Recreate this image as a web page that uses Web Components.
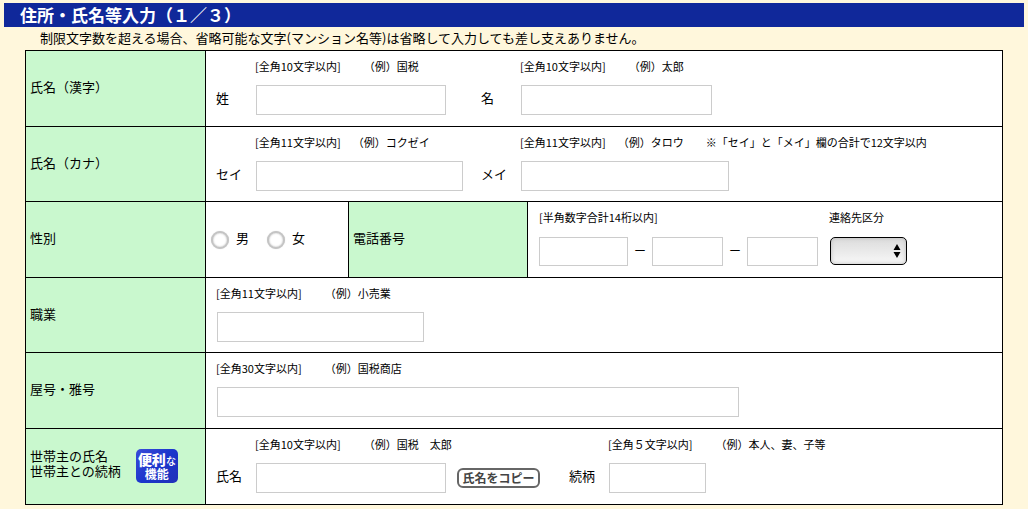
<!DOCTYPE html>
<html lang="ja">
<head>
<meta charset="utf-8">
<meta name="viewport" content="width=device-width, initial-scale=1">
<title>住所・氏名等入力</title>
<style>
  body {
    margin: 0;
    background: #fff7dc;
    color: #000;
    font-family: "Noto Sans CJK JP", sans-serif;
    font-size: 13px;
    line-height: 15px;
    text-spacing-trim: space-all;
  }
</style>
</head>
<body>
<entry-page></entry-page>

<template id="entry-page">
  <style>
    :host { display: block; padding: 3px 4px 4px; }
    p { margin: 0 36px; padding-bottom: 2px; line-height: 21px; }
    form { margin: 0 21px; border: 1px solid #000; border-top: 0; background: #fff; }
    form-row:nth-child(even):not(:last-child) { --row: 75px; }
    .two { display: flex; align-items: center; gap: 15px; }
    .two span { padding-bottom: 3px; }
    handy-badge { margin-top: 2px; }
  </style>
  <page-banner>住所・氏名等入力（１／３）</page-banner>
  <p>制限文字数を超える場合、省略可能な文字(マンション名等)は省略して入力しても差し支えありません。</p>
  <form>
    <form-row>
      <span slot="head">氏名（漢字）</span>
      <text-field label="姓" hint="[全角10文字以内]" example="　　（例）国税" width="190" span="265"></text-field>
      <text-field label="名" hint="[全角10文字以内]" example="　　（例）太郎" width="191"></text-field>
    </form-row>
    <form-row>
      <span slot="head">氏名（カナ）</span>
      <text-field label="セイ" hint="[全角11文字以内]" example="　（例）コクゼイ" width="207" span="265"></text-field>
      <text-field label="メイ" hint="[全角11文字以内]" example="　（例）タロウ　　※「セイ」と「メイ」欄の合計で12文字以内" width="208"></text-field>
    </form-row>
    <form-row>
      <span slot="head">性別</span>
      <gender-choice></gender-choice>
      <phone-field></phone-field>
    </form-row>
    <form-row>
      <span slot="head">職業</span>
      <text-field name="職業" hint="[全角11文字以内]" example="　　（例）小売業" width="207"></text-field>
    </form-row>
    <form-row>
      <span slot="head">屋号・雅号</span>
      <text-field name="屋号・雅号" hint="[全角30文字以内]" example="　　（例）国税商店" width="522"></text-field>
    </form-row>
    <form-row>
      <div class="two" slot="head">
        <span>世帯主の氏名<br>世帯主との続柄</span>
        <handy-badge></handy-badge>
      </div>
      <text-field label="氏名" hint="[全角10文字以内]" example="　　（例）国税　太郎" width="190" span="353">
        <copy-button>氏名をコピー</copy-button>
      </text-field>
      <text-field label="続柄" hint="[全角５文字以内]" example="　　（例）本人、妻、子等" width="97"></text-field>
    </form-row>
  </form>
</template>

<template id="page-banner">
  <style>
    :host { display: block; background: #10289a; color: #fff; }
    h1 { margin: 0; padding: 0 16px 1px; font-size: 17px; line-height: 23px; text-spacing-trim: normal; }
  </style>
  <h1><slot></slot></h1>
</template>

<template id="form-row">
  <style>
    :host { display: flex; box-sizing: border-box; min-height: var(--row, 76px); border-top: 1px solid #000; }
    .head {
      flex: none; display: flex; align-items: center; box-sizing: border-box;
      width: 180px; padding: 0 4px 4px; border-right: 1px solid #000; background: #c9f8ce;
    }
    .body { flex: 1; display: flex; min-width: 0; padding-left: 10px; }
  </style>
  <div class="head"><slot name="head"></slot></div>
  <div class="body"><slot></slot></div>
</template>

<template id="text-field">
  <style>
    :host { display: block; flex: none; padding-top: 7px; }
    .hint { display: flex; gap: 1px; margin-bottom: 11px; font-size: 11px; line-height: 16px; white-space: pre; }
    .line { display: flex; align-items: center; }
    label { width: 39px; padding-bottom: 5px; }
    label:empty { display: none; }
    .labelled .hint { margin-left: 39px; }
    input {
      box-sizing: border-box; height: 30px; margin: 0 0 0 1px; padding: 0 4px;
      border: 1px solid #ccc; border-radius: 0; background: #fff; font: inherit;
    }
    ::slotted(copy-button) { margin-left: 11px; }
  </style>
  <div class="wrap">
    <div class="hint" id="hint"><span class="limit"></span><span class="example"></span></div>
    <div class="line"><label for="box"></label><input id="box" type="text" aria-describedby="hint"><slot></slot></div>
  </div>
</template>

<template id="gender-choice">
  <style>
    :host { display: flex; align-items: center; flex: none; box-sizing: border-box; width: 132px; padding-bottom: 4px; }
    label { display: flex; align-items: center; gap: 7px; margin-right: 18px; }
    input {
      appearance: none; box-sizing: border-box; width: 18px; height: 18px; margin: 4px 0 0;
      border: 2px solid #c4c4c4; border-radius: 50%;
      background: #fff; box-shadow: inset 0 0 2px #bbb, 0 0 1px #ccc;
    }
    input:checked { background: radial-gradient(#333 3px, #fff 4px); }
    div { display: flex; margin-left: -5px; }
  </style>
  <div>
    <label><input type="radio" name="gender" value="m">男</label>
    <label><input type="radio" name="gender" value="f">女</label>
  </div>
</template>

<template id="phone-field">
  <style>
    :host { display: flex; flex: 1; }
    .head {
      display: flex; align-items: center; box-sizing: border-box; width: 180px; padding: 0 4px 4px;
      border: solid #000; border-width: 0 1px; background: #c9f8ce;
    }
    .group { padding: 7px 0 0 11px; }
    .small { display: block; margin-bottom: 12px; font-size: 11px; line-height: 16px; white-space: nowrap; }
    .line { display: flex; align-items: center; }
    .line span { width: 24px; padding-bottom: 5px; text-align: center; }
    input {
      box-sizing: border-box; width: 71px; height: 29px; margin: 0; padding: 0 4px;
      border: 1px solid #ccc; border-radius: 0; background: #fff; font: inherit;
    }
    input.wide { width: 89px; }
    .pick { display: grid; }
    .pick svg, select { grid-area: 1 / 1; }
    .pick svg { justify-self: end; align-self: center; margin-right: 6px; pointer-events: none; z-index: 1; }
    select {
      appearance: none; width: 77px; height: 28px; margin: 0 0 0 1px; border: 1px solid #000; border-radius: 5px;
      background: linear-gradient(#dcdcdc, #e8e8e8 45%, #f8f8f8); box-shadow: inset 0 0 4px #bbb; font: inherit;
    }
  </style>
  <div class="head">電話番号</div>
  <div class="group" role="group" aria-label="電話番号">
    <span class="small">[半角数字合計14桁以内]</span>
    <div class="line">
      <input class="wide" type="tel" aria-label="市外局番"><span>－</span>
      <input type="tel" aria-label="市内局番"><span>－</span>
      <input type="tel" aria-label="加入者番号">
    </div>
  </div>
  <div class="group">
    <label class="small" for="kind">連絡先区分</label>
    <div class="pick">
      <select id="kind"><option></option></select>
      <svg width="8" height="16" viewBox="0 0 8 16" aria-hidden="true"><path d="M4 1 7.5 7H.5zM4 15 .5 9h7z"/></svg>
    </div>
  </div>
</template>

<template id="handy-badge">
  <style>
    :host {
      display: block; box-sizing: border-box; width: 42px; height: 34px; padding-top: 2px; border-radius: 5px;
      background: linear-gradient(135deg, #3a4cd8, #1c36cc 50%, #2030b8); color: #fff;
      font-weight: 700; text-align: center; white-space: nowrap;
    }
    b, span { display: block; font-size: 14px; line-height: 16px; }
    span { font-size: 12px; line-height: 14px; }
    small { font-size: 10px; line-height: 0; font-weight: 500; }
  </style>
  <b>便利<small>な</small></b><span>機能</span>
</template>

<template id="copy-button">
  <style>
    :host { display: block; }
    button {
      display: block; box-sizing: border-box; width: 83px; height: 20px; padding: 0;
      border: 2px solid #666; border-radius: 6px; background: #fff; color: #444;
      font: 700 12px/14px "Noto Sans CJK JP", sans-serif; white-space: nowrap;
    }
  </style>
  <button type="button"><slot></slot></button>
</template>

<script>
  class Stamped extends HTMLElement {
    constructor() {
      super();
      this.attachShadow({ mode: 'open' })
        .append(document.getElementById(this.localName).content.cloneNode(true));
    }
  }

  class TextField extends Stamped {
    connectedCallback() {
      const root = this.shadowRoot;
      const input = root.querySelector('input');
      const label = this.getAttribute('label') || '';
      root.querySelector('label').textContent = label;
      root.querySelector('.wrap').classList.toggle('labelled', label !== '');
      root.querySelector('.limit').textContent = this.getAttribute('hint');
      root.querySelector('.example').textContent = this.getAttribute('example');
      input.style.width = this.getAttribute('width') + 'px';
      if (!label) input.setAttribute('aria-label', this.getAttribute('name'));
      if (this.hasAttribute('span')) this.style.width = this.getAttribute('span') + 'px';
    }
  }

  customElements.define('text-field', TextField);
  for (const name of ['page-banner', 'form-row', 'gender-choice', 'phone-field', 'handy-badge', 'copy-button', 'entry-page']) {
    customElements.define(name, class extends Stamped {});
  }
</script>
</body>
</html>
